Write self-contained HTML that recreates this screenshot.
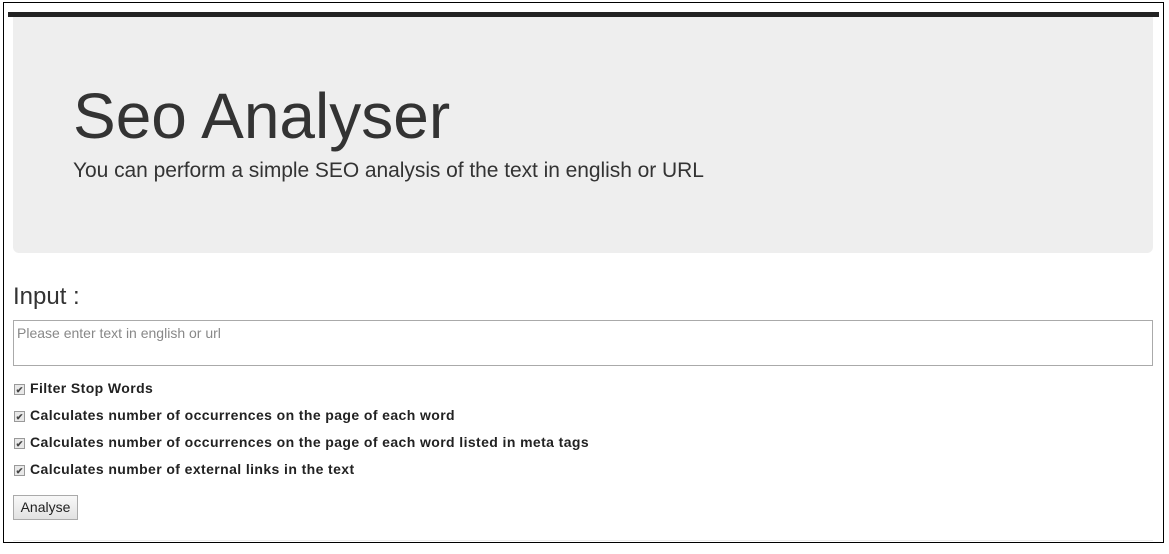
<!DOCTYPE html>
<html><head><meta charset="utf-8"><style>
body{margin:0;width:1169px;height:554px;background:#fff;font-family:"Liberation Sans",Arial,sans-serif;color:#333;position:relative;overflow:hidden}
.frame{position:absolute;left:3px;top:2px;width:1161px;height:541px;border:1px solid #000;box-sizing:border-box}
.bar{position:absolute;left:8px;top:12px;width:1151px;height:5px;background:#222}
.jumbo{position:absolute;left:13px;top:17px;width:1140px;height:236px;background:#eee;border-radius:0 0 6px 6px}
h1{position:absolute;left:73px;top:78px;margin:0;font-size:64px;font-weight:normal;line-height:76px;color:#333}
.sub{position:absolute;left:73px;top:159px;font-size:21px;line-height:24px;letter-spacing:-0.05px}
.label{position:absolute;left:13px;top:283px;font-size:24px;line-height:28px}
.ta{position:absolute;left:13px;top:320px;width:1140px;height:46px;border:1px solid #aaa;box-sizing:border-box;font-size:14px;color:#888;padding:4px 3px}
.cb{position:absolute;left:14px;font-size:14px;font-weight:bold;color:#222;line-height:16px;letter-spacing:0.4px}
.cb i{display:inline-block;width:11px;height:11px;border:1px solid #999;background:#e8e8e8;vertical-align:0px;margin-right:5px;font-style:normal;font-size:9px;line-height:10px;text-align:center;color:#444;box-sizing:border-box;letter-spacing:0}
.btn{position:absolute;left:13px;top:495px;width:65px;height:25px;border:1px solid #aaa;background:linear-gradient(#f8f8f8,#e2e2e2);box-sizing:border-box;font-size:14px;text-align:center;line-height:23px;color:#222}
.hr{position:absolute;left:13px;top:540px;width:1140px;height:1px;background:#eee}
</style></head><body>
<div class="frame"></div>
<div class="bar"></div>
<div class="jumbo"></div>
<h1>Seo Analyser</h1>
<div class="sub">You can perform a simple SEO analysis of the text in english or URL</div>
<div class="label">Input :</div>
<div class="ta">Please enter text in english or url</div>
<div class="cb" style="top:380px"><i>✔</i>Filter Stop Words</div>
<div class="cb" style="top:407px"><i>✔</i>Calculates number of occurrences on the page of each word</div>
<div class="cb" style="top:434px"><i>✔</i>Calculates number of occurrences on the page of each word listed in meta tags</div>
<div class="cb" style="top:461px"><i>✔</i>Calculates number of external links in the text</div>
<div class="btn">Analyse</div>
<div class="hr"></div>
</body></html>
